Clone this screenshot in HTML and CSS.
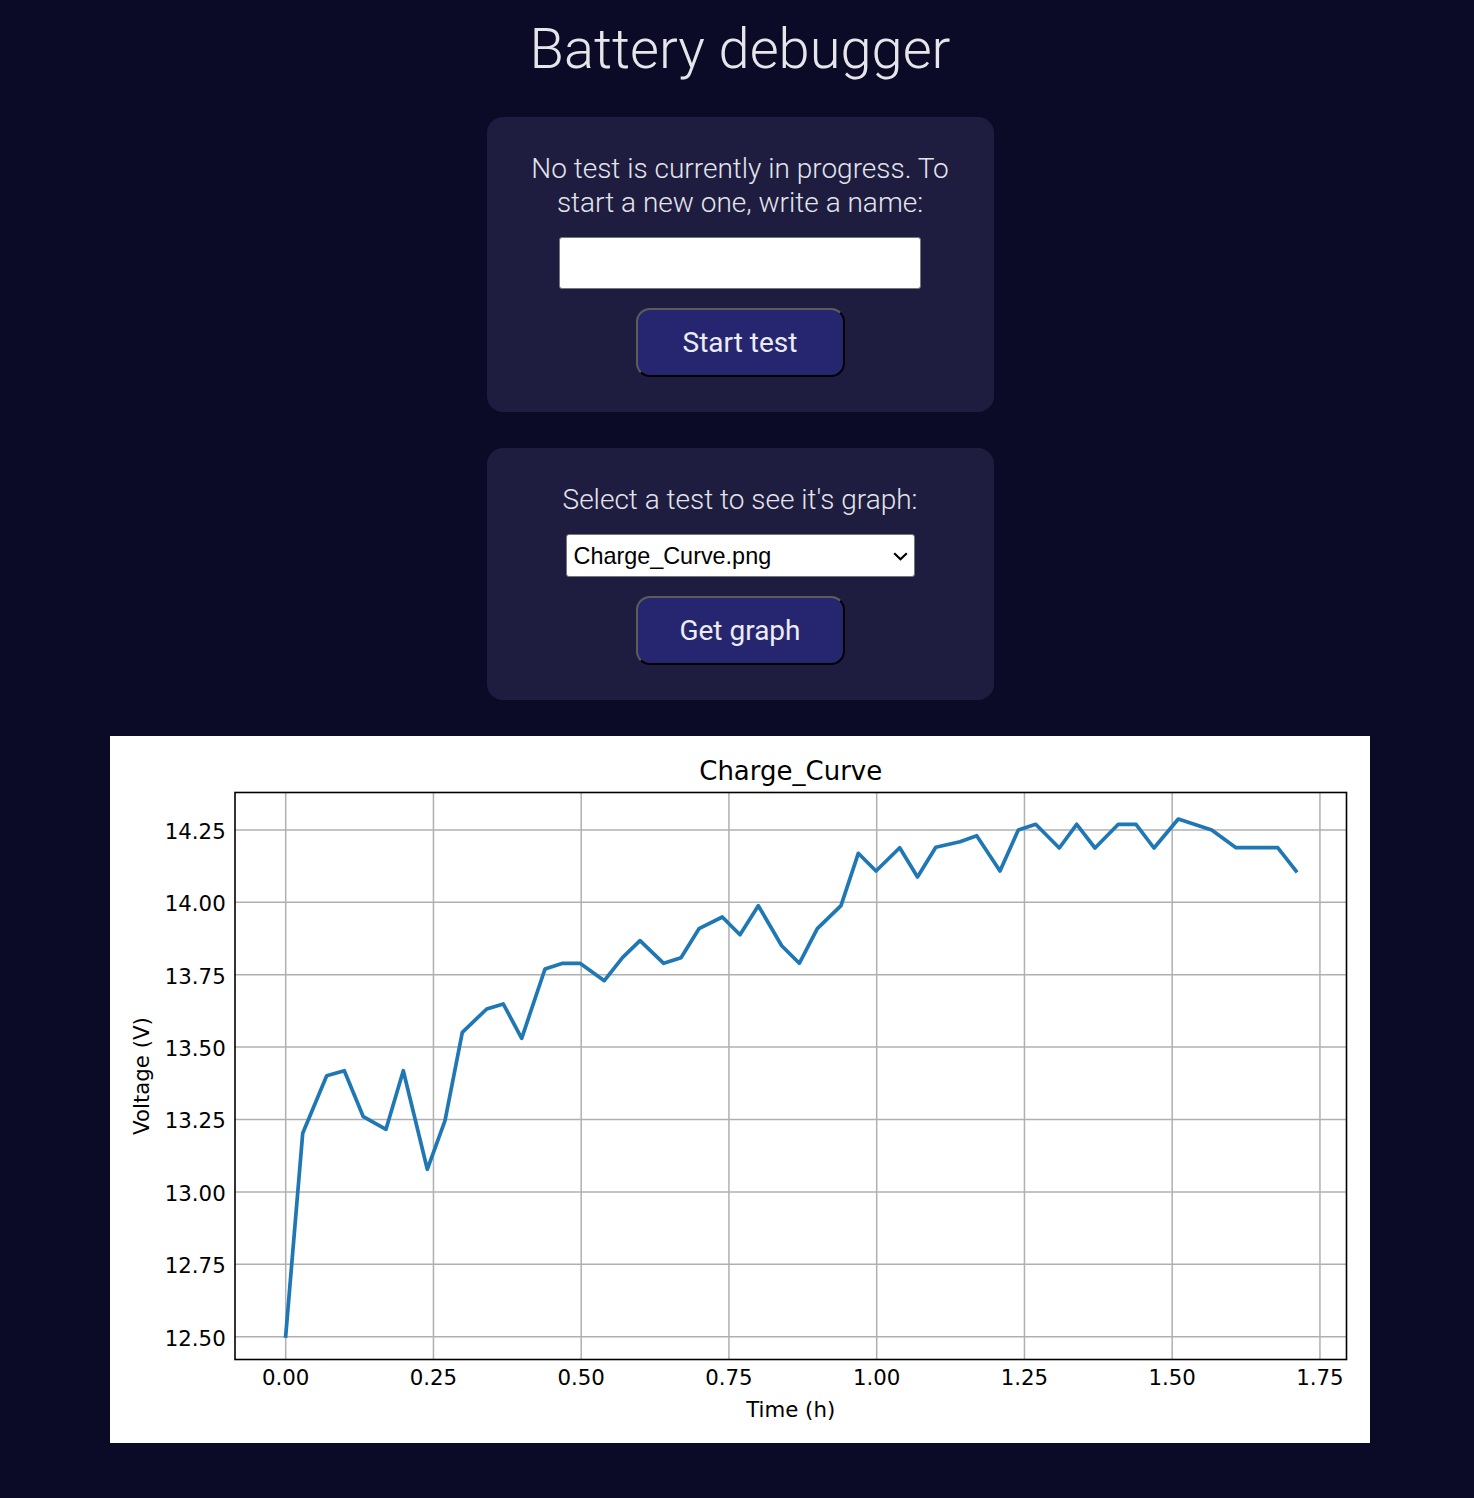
FILE: index.html
```html
<!DOCTYPE html>
<html lang="en">
<head>
<meta charset="utf-8">
<title>Battery debugger</title>
<link rel="stylesheet" href="styles.css">
</head>
<body>
<main class="page">
  <h1 class="title">Battery debugger</h1>

  <section class="card">
    <p class="card-text">No test is currently in progress. To start a new one, write a name:</p>
    <input class="name-input" type="text" aria-label="Test name">
    <button class="btn" type="button">Start test</button>
  </section>

  <section class="card">
    <p class="card-text">Select a test to see it's graph:</p>
    <div class="select-wrap">
      <select class="test-select" aria-label="Test">
        <option>Charge_Curve.png</option>
      </select>
      <svg class="chevron" width="15" height="9" viewBox="0 0 15 9" aria-hidden="true">
        <path d="M1.2 1.2 L7.5 7.3 L13.8 1.2" fill="none" stroke="#000" stroke-width="2.2"/>
      </svg>
    </div>
    <button class="btn" type="button">Get graph</button>
  </section>

  <div class="chart">
    <svg class="chart-svg" width="1260" height="707" viewBox="0 0 1260 707">
      <g class="grid">
        <line x1="175.7" y1="56.5" x2="175.7" y2="623.5"/>
        <line x1="323.45" y1="56.5" x2="323.45" y2="623.5"/>
        <line x1="471.2" y1="56.5" x2="471.2" y2="623.5"/>
        <line x1="618.95" y1="56.5" x2="618.95" y2="623.5"/>
        <line x1="766.7" y1="56.5" x2="766.7" y2="623.5"/>
        <line x1="914.45" y1="56.5" x2="914.45" y2="623.5"/>
        <line x1="1062.2" y1="56.5" x2="1062.2" y2="623.5"/>
        <line x1="1209.95" y1="56.5" x2="1209.95" y2="623.5"/>
        <line x1="125" y1="600.7" x2="1236.5" y2="600.7"/>
        <line x1="125" y1="528.3" x2="1236.5" y2="528.3"/>
        <line x1="125" y1="455.9" x2="1236.5" y2="455.9"/>
        <line x1="125" y1="383.5" x2="1236.5" y2="383.5"/>
        <line x1="125" y1="311.1" x2="1236.5" y2="311.1"/>
        <line x1="125" y1="238.7" x2="1236.5" y2="238.7"/>
        <line x1="125" y1="166.3" x2="1236.5" y2="166.3"/>
        <line x1="125" y1="93.9" x2="1236.5" y2="93.9"/>
      </g>
      <polyline class="series" points="175.7,600 192.7,397.3 216.7,339.7 234.3,334.7 253.3,380.7 276,393.3 293.3,334.7 317.3,433.3 335,384.7 352.3,296.3 376.7,273 393.3,268 411.7,302.3 435,233 452.7,227.3 470,227.3 494.3,244.7 512.7,221.3 530,204.7 553.7,227.3 571,221.7 589,192.7 612.3,181 630,198.7 648.3,169.7 671.7,209.7 689.3,227.3 707.3,192.7 731,169.7 748.3,117.3 766,135 789.7,111.7 807.5,141 825.8,111.2 850,105.7 866.7,99.7 890,135 908.3,94 925.7,88.3 949.3,112 966.7,88.3 985,112 1008.3,88.3 1026,88.3 1044,112 1068.3,83 1101.7,94 1126,111.7 1167.7,111.7 1186,135"/>
      <rect class="spines" x="125" y="56.5" width="1111.5" height="567"/>
      <g class="ytick">
        <text x="115.7" y="609.5">12.50</text>
        <text x="115.7" y="537.1">12.75</text>
        <text x="115.7" y="464.7">13.00</text>
        <text x="115.7" y="392.3">13.25</text>
        <text x="115.7" y="319.9">13.50</text>
        <text x="115.7" y="247.5">13.75</text>
        <text x="115.7" y="175.1">14.00</text>
        <text x="115.7" y="102.7">14.25</text>
      </g>
      <g class="xtick">
        <text x="175.7" y="649">0.00</text>
        <text x="323.45" y="649">0.25</text>
        <text x="471.2" y="649">0.50</text>
        <text x="618.95" y="649">0.75</text>
        <text x="766.7" y="649">1.00</text>
        <text x="914.45" y="649">1.25</text>
        <text x="1062.2" y="649">1.50</text>
        <text x="1209.95" y="649">1.75</text>
      </g>
      <text class="chart-title" x="680.75" y="44">Charge_Curve</text>
      <text class="axis-label" x="680.75" y="681">Time (h)</text>
      <text class="axis-label" transform="translate(38.5,340) rotate(-90)">Voltage (V)</text>
    </svg>
  </div>
</main>
</body>
</html>
```

FILE: styles.css
```css
html, body {
  margin: 0;
  padding: 0;
  background: #0b0b28;
}

.page {
  display: flex;
  flex-direction: column;
  align-items: center;
  padding: 16px 0 55px 6px;
  font-family: Roboto, "Liberation Sans", sans-serif;
}

.title {
  margin: 0 0 35px;
  font-size: 56px;
  line-height: 66px;
  font-weight: 300;
  color: #e6e6ea;
}

.card {
  box-sizing: border-box;
  width: 507px;
  padding: 35px 35px;
  margin-bottom: 36px;
  background: #1e1d40;
  border-radius: 16px;
  display: flex;
  flex-direction: column;
  align-items: center;
}

.card-text {
  margin: 0 0 17px;
  font-size: 28px;
  line-height: 34px;
  font-weight: 300;
  color: #e4e4ec;
  text-align: center;
}

.name-input {
  box-sizing: border-box;
  width: 362px;
  height: 52px;
  margin: 0;
  padding: 0 8px;
  border: 1px solid #767676;
  border-radius: 3px;
  background: #fff;
}

.btn {
  box-sizing: border-box;
  width: 209px;
  height: 69px;
  margin-top: 19px;
  padding: 0;
  background: #262670;
  border: 2px solid;
  border-color: #5c5c5c #000 #000 #5c5c5c;
  border-radius: 14px;
  color: #ececf2;
  font-family: Roboto, "Liberation Sans", sans-serif;
  font-size: 28px;
  font-weight: 400;
}

.select-wrap {
  position: relative;
  width: 349px;
  height: 43px;
}

.test-select {
  box-sizing: border-box;
  width: 349px;
  height: 43px;
  margin: 0;
  padding: 0 0 0 7px;
  -webkit-appearance: none;
  appearance: none;
  border: 1px solid #767676;
  border-radius: 3px;
  background: #fff;
  color: #000;
  font-family: "Liberation Sans", Arial, sans-serif;
  font-size: 23.4px;
}

.chevron {
  position: absolute;
  right: 7px;
  top: 18px;
  pointer-events: none;
}

.chart {
  width: 1260px;
  height: 707px;
  background: #fff;
  flex-shrink: 0;
}

.chart-svg {
  display: block;
  font-family: "DejaVu Sans", sans-serif;
}

.grid line {
  stroke: #b0b0b0;
  stroke-width: 1.5;
}

.series {
  fill: none;
  stroke: #1f77b4;
  stroke-width: 3.7;
  stroke-linejoin: round;
  stroke-linecap: square;
}

.spines {
  fill: none;
  stroke: #000;
  stroke-width: 1.6;
}

.ytick text {
  font-size: 21.3px;
  text-anchor: end;
  fill: #000;
}

.xtick text {
  font-size: 21.3px;
  text-anchor: middle;
  fill: #000;
}

.chart-title {
  font-size: 26px;
  text-anchor: middle;
  fill: #000;
}

.axis-label {
  font-size: 21.3px;
  text-anchor: middle;
  fill: #000;
}
```
